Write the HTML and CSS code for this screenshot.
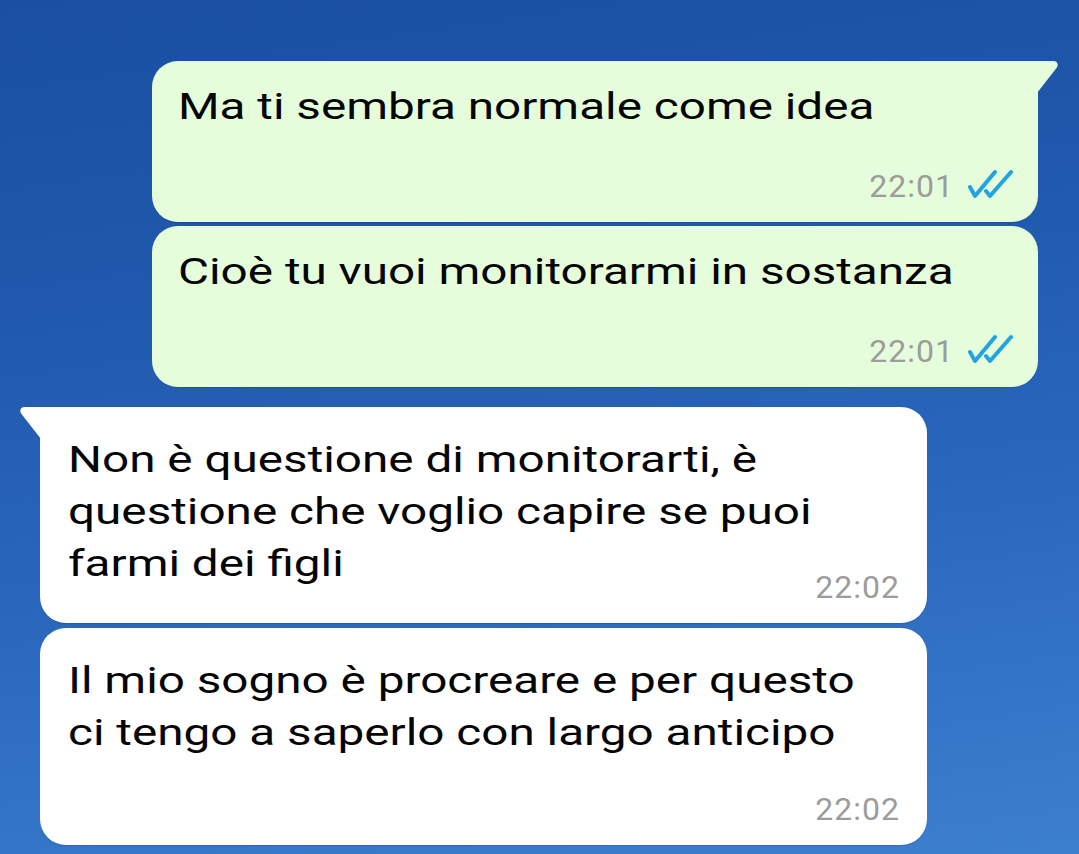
FILE: index.html
```html
<!DOCTYPE html>
<html lang="it">
<head>
<meta charset="utf-8">
<title>Chat</title>
<link rel="stylesheet" href="styles.css">
</head>
<body>
<div class="chat">
  <div class="group group-out">
    <div class="msg out first">
      <svg class="tail tail-out" viewBox="0 0 22 32" width="22" height="32"><path d="M0 0 H16 C20.5 0 22 3.5 19.5 7 L0 32 Z"/></svg>
      <p class="text">Ma ti sembra normale come idea</p>
      <div class="meta"><span class="time">22:01</span><svg class="ticks" viewBox="0 0 46 30" width="46" height="30"><path d="M2 18 L7 27 L27 3 M18 22 L22 27 L43 3"/></svg></div>
    </div>
    <div class="msg out">
      <p class="text">Cioè tu vuoi monitorarmi in sostanza</p>
      <div class="meta"><span class="time">22:01</span><svg class="ticks" viewBox="0 0 46 30" width="46" height="30"><path d="M2 18 L7 27 L27 3 M18 22 L22 27 L43 3"/></svg></div>
    </div>
  </div>
  <div class="group group-in">
    <div class="msg in first">
      <svg class="tail tail-in" viewBox="0 0 22 32" width="22" height="32"><path d="M22 0 H6 C1.5 0 0 3.5 2.5 7 L22 32 Z"/></svg>
      <p class="text">Non è questione di monitorarti, è<br>questione che voglio capire se puoi<br>farmi dei figli</p>
      <div class="meta meta-inline"><span class="time">22:02</span></div>
    </div>
    <div class="msg in">
      <p class="text">Il mio sogno è procreare e per questo<br>ci tengo a saperlo con largo anticipo</p>
      <div class="meta"><span class="time">22:02</span></div>
    </div>
  </div>
</div>
</body>
</html>
```
FILE: styles.css
```css
html, body {
  margin: 0;
  padding: 0;
}

body {
  width: 1079px;
  height: 854px;
  overflow: hidden;
  background: linear-gradient(172deg, #1a4fa3 0%, #1f58ac 30%, #2b69be 65%, #3d7fcf 100%);
  font-family: Roboto, "Noto Sans", sans-serif;
}

.chat {
  display: flex;
  flex-direction: column;
  padding-top: 61px;
}

.group {
  display: flex;
  flex-direction: column;
  gap: 4px;
}

.group-in {
  margin-top: 20px;
  gap: 5px;
}

.msg {
  position: relative;
  box-sizing: border-box;
  width: 886px;
  border-radius: 26px;
  padding: 20px 24px 16px 26px;
  box-shadow: 0 1px 1px rgba(0, 0, 0, 0.12);
}

.out {
  align-self: flex-end;
  margin-right: 41px;
  background: #e5fddb;
}

.in {
  align-self: flex-start;
  margin-left: 40px;
  width: 887px;
  background: #ffffff;
  padding: 27px 27px 16px 28px;
}

.out.first {
  border-top-right-radius: 0;
}

.in.first {
  border-top-left-radius: 0;
}

.tail {
  position: absolute;
  top: 0;
  display: block;
}

.tail-out {
  right: -21px;
  fill: #e5fddb;
}

.tail-in {
  left: -21px;
  fill: #ffffff;
}

.text {
  margin: 0;
  width: fit-content;
  font-size: 37px;
  line-height: 52px;
  color: #050505;
  white-space: nowrap;
  transform: scaleX(1.288);
  transform-origin: left top;
}

.meta {
  display: flex;
  justify-content: flex-end;
  align-items: center;
  gap: 14px;
  height: 40px;
  margin-top: 33px;
}

.in .meta {
  margin-top: 30px;
}

.in .meta.meta-inline {
  margin-top: -23px;
}

.time {
  font-size: 32px;
  line-height: 40px;
  letter-spacing: 1px;
  color: #9c9c9c;
}

.ticks {
  display: block;
  fill: none;
  stroke: #22a3e2;
  stroke-width: 4;
  stroke-linecap: round;
  stroke-linejoin: round;
  margin-top: -4px;
}
```
